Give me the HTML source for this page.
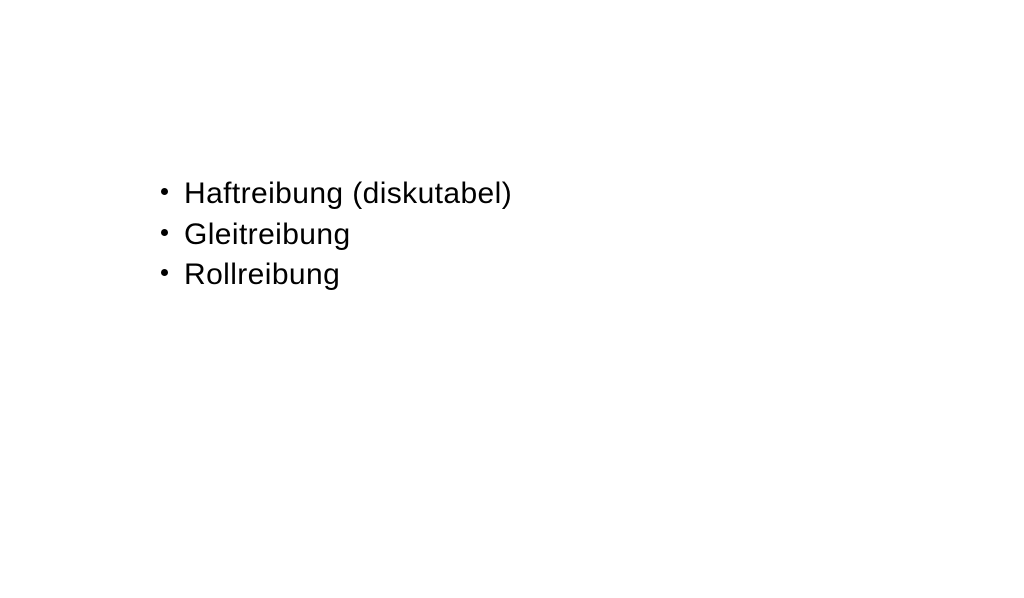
<!DOCTYPE html>
<html><head><meta charset="utf-8"><style>
html,body{margin:0;padding:0;background:#fff;width:1024px;height:598px;overflow:hidden}
.l{position:absolute;left:184px;font-family:"Liberation Sans","DejaVu Sans",sans-serif;font-size:30px;letter-spacing:0.4px;color:#000;line-height:1;white-space:nowrap}
.b{position:absolute;left:161px;width:7px;height:7px;border-radius:50%;background:#000}
</style></head><body>
<div class="b" style="top:188px"></div><div class="l" style="top:179px">Haftreibung (diskutabel)</div>
<div class="b" style="top:229px"></div><div class="l" style="top:220px">Gleitreibung</div>
<div class="b" style="top:269px"></div><div class="l" style="top:260px">Rollreibung</div>
</body></html>
